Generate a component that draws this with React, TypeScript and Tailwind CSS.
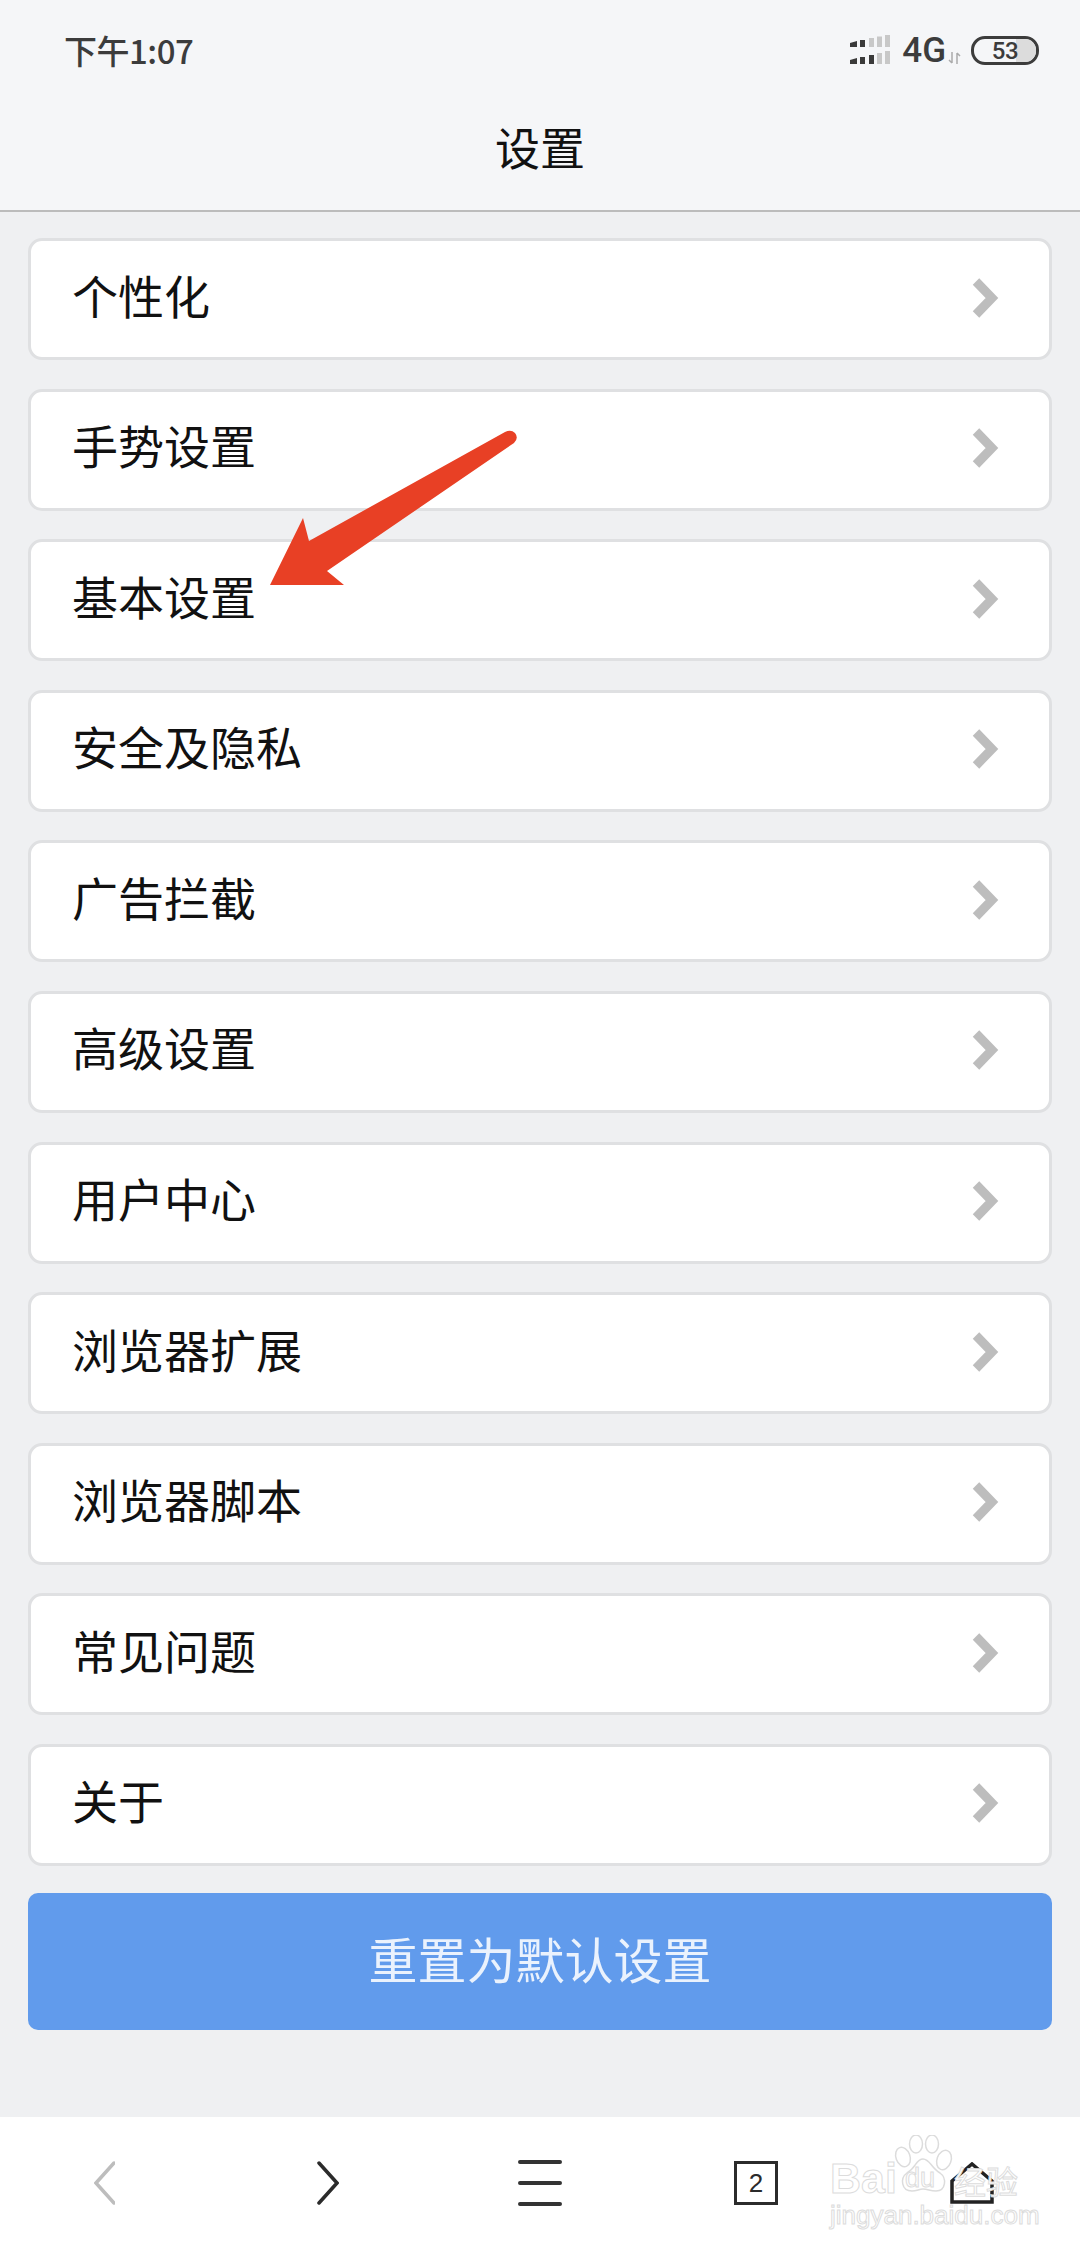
import React from "react";

const rows = [
  "个性化",
  "手势设置",
  "基本设置",
  "安全及隐私",
  "广告拦截",
  "高级设置",
  "用户中心",
  "浏览器扩展",
  "浏览器脚本",
  "常见问题",
  "关于",
];

const cjk = "font-['Noto_Sans_CJK_SC','Noto_Sans',sans-serif]";

const SignalIcon = () => (
  <svg width="41" height="32" viewBox="0 0 41 32">
    <path d="M0 8l7-2v6H0z" fill="#3a3a3a" />
    <path d="M10 5h5v7h-5z" fill="#3a3a3a" />
    <path d="M19 3h5v9h-5z" fill="#c8c8c8" />
    <path d="M27 1.500h5V12h-5z" fill="#c8c8c8" />
    <path d="M35 0h5v12h-5z" fill="#c8c8c8" />
    <path d="M0 25l7-2v6H0z" fill="#3a3a3a" />
    <path d="M10 22h5v7h-5z" fill="#3a3a3a" />
    <path d="M19 20h5v9h-5z" fill="#3a3a3a" />
    <path d="M27 18h5v11h-5z" fill="#c8c8c8" />
    <path d="M35 16h5v13h-5z" fill="#c8c8c8" />
  </svg>
);

const DataArrows = () => (
  <svg width="13" height="12" viewBox="0 0 13 12" fill="none" stroke="#aaa" strokeWidth="1.500">
    <path d="M4 0v11M1 8l3 3" />
    <path d="M9 12V1M12 4L9 1" />
  </svg>
);

const Battery = () => (
  <div className="relative flex h-[29px] w-[68px] items-center justify-center overflow-hidden rounded-[14px] border-[3px] border-[#3c3c3c]">
    <div className="absolute inset-y-0 right-0 w-[20px] bg-[#dcdcdc]" />
    <span className="relative font-['Roboto',sans-serif] text-[24px] leading-none font-medium tracking-[-0.5px] text-[#3c3c3c]">53</span>
  </div>
);

const RowChevron = () => (
  <svg width="28" height="40" viewBox="0 0 28 40" fill="none">
    <path d="M4 3.500L20 20L4 36.500" stroke="#bdbdbd" strokeWidth="9" />
  </svg>
);

const Arrow = () => (
  <svg className="absolute top-[425px] left-[265px]" width="260" height="165" viewBox="265 425 260 165">
    <path
      d="M270 585L303 518L309 541L505 432Q511 429 515 433Q519 438 514 443L327 571L344 585Z"
      fill="#e84025"
    />
  </svg>
);

const Watermark = () => (
  <div className="absolute top-[2135px] left-[826px] h-[95px] w-[200px] text-white [-webkit-text-stroke:1px_#dcdcdc]">
    <svg className="absolute top-0 left-[66px]" width="62" height="60" viewBox="0 0 62 60" fill="#fff" stroke="#dcdcdc" strokeWidth="1.500">
      <ellipse cx="11" cy="22" rx="7" ry="10" transform="rotate(-20 11 22)" />
      <ellipse cx="24" cy="9" rx="6.500" ry="9" />
      <ellipse cx="40" cy="9" rx="6.500" ry="9" />
      <ellipse cx="52" cy="25" rx="7" ry="10" transform="rotate(20 52 25)" />
      <path d="M31 24C24 24 24 33 15 38C8 43 9 56 20 56C25 56 27 54 31 54C36 54 38 56 44 56C54 56 55 43 48 38C39 33 38 24 31 24Z" />
    </svg>
    <span className="absolute top-[22px] left-[4px] font-['Liberation_Sans',sans-serif] text-[43px] leading-none font-bold">Bai</span>
    <span className="absolute top-[30px] left-[79px] font-['Liberation_Sans',sans-serif] text-[27px] leading-none">du</span>
    <span className={`absolute top-[29px] left-[128px] text-[32px] leading-none ${cjk}`}>经验</span>
    <span className="absolute top-[67px] left-[4px] font-['Liberation_Sans',sans-serif] text-[26px] leading-none">jingyan.baidu.com</span>
  </div>
);

export default function App() {
  return (
    <div className={`relative flex h-[2248px] w-[1080px] flex-col overflow-hidden bg-[#eff0f2] ${cjk}`}>
      <header className="h-[212px] border-b-2 border-[#bcbcbc] bg-[#f5f6f8]">
        <div className="flex items-center justify-between pt-[33px] pr-[41px] pl-[64px]">
          <span className="-mt-[2px] text-[33px] leading-[32px] font-medium tracking-[-0.5px] text-[#3c3c3c]">下午1:07</span>
          <div className="flex items-center">
            <SignalIcon />
            <span className="ml-[11px] font-['Roboto',sans-serif] text-[35px] leading-none font-medium text-[#3c3c3c]">4G</span>
            <span className="mt-[14px] ml-[2px]"><DataArrows /></span>
            <span className="ml-[10px]"><Battery /></span>
          </div>
        </div>
        <h1 className="mt-[47px] text-center text-[45px] leading-[64px] font-normal text-[#111]">设置</h1>
      </header>

      <main className="flex flex-col px-[28px] pt-[26px]">
        <div className="flex flex-col gap-[28.6px]">
          {rows.map((label) => (
            <div
              key={label}
              className="flex h-[122px] items-center justify-between rounded-[14px] border-[3px] border-[#dfe0e2] bg-white pr-[49px] pl-[41px]"
            >
              <span className="mb-[11px] text-[46px] leading-none text-[#111]">{label}</span>
              <span className="mb-[3px]"><RowChevron /></span>
            </div>
          ))}
        </div>
        <button className="mt-[27px] h-[137px] rounded-[10px] bg-[#619bec] pb-[8px] text-[49px] text-[#eaf2fd]">
          重置为默认设置
        </button>
      </main>

      <nav className="mt-auto flex h-[131px] items-center bg-white pl-[94px]">
        <svg width="21" height="44" viewBox="0 0 21 44" fill="none" stroke="#bdbdbd" strokeWidth="3.500" strokeLinecap="round">
          <path d="M20 2L2 22L20 42" />
        </svg>
        <svg className="ml-[202px]" width="22" height="44" viewBox="0 0 22 44" fill="none" stroke="#2b2b2b" strokeWidth="3.500" strokeLinecap="round">
          <path d="M2 2L20 22L2 42" />
        </svg>
        <svg className="ml-[179px]" width="44" height="46" viewBox="0 0 44 46" fill="none" stroke="#333" strokeWidth="4" strokeLinecap="round">
          <path d="M2 2H42M2 23H42M2 44H42" />
        </svg>
        <div className="ml-[172px] flex h-[44px] w-[44px] items-center justify-center border-[3px] border-[#2b2b2b] font-['Liberation_Sans',sans-serif] text-[26px] leading-none text-[#2b2b2b]">
          2
        </div>
        <svg className="ml-[172px]" width="44" height="42" viewBox="0 0 44 42" fill="none" stroke="#222" strokeWidth="3.500">
          <path d="M2 40V19L22 2L42 19V40Z" />
        </svg>
      </nav>

      <Arrow />
      <Watermark />
    </div>
  );
}
